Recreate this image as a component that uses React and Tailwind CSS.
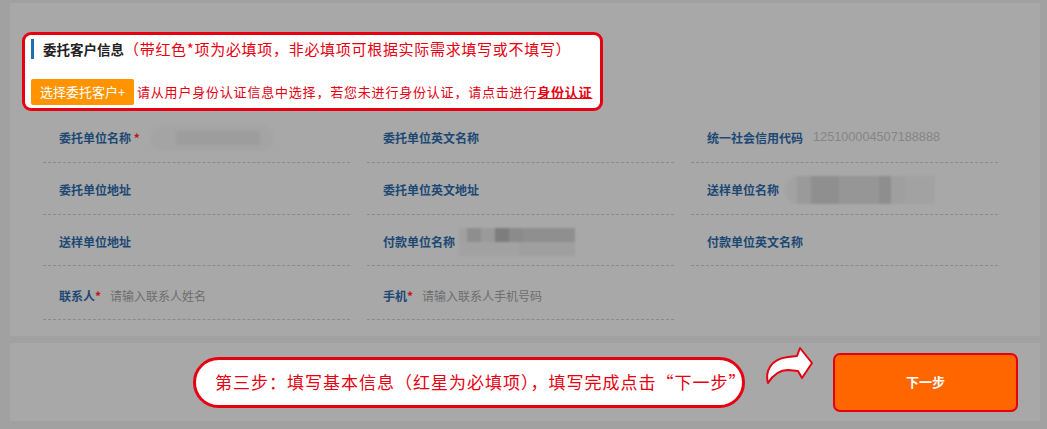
import React from 'react';

const rows = [
  {
    h: 'h-[52px] pt-[3px]',
    cells: [
      { label: '委托单位名称', req: ' *', blur: 'name' },
      { label: '委托单位英文名称' },
      { label: '统一社会信用代码', value: '125100004507188888' },
    ],
  },
  {
    h: 'h-[52px] pt-[3px]',
    cells: [
      { label: '委托单位地址' },
      { label: '委托单位英文地址' },
      { label: '送样单位名称', blur: 'sample' },
    ],
  },
  {
    h: 'h-[51px] pt-[3px]',
    cells: [
      { label: '送样单位地址' },
      { label: '付款单位名称', blur: 'pay' },
      { label: '付款单位英文名称' },
    ],
  },
  {
    h: 'h-[54px] pt-[6px]',
    cells: [
      { label: '联系人', req: '*', placeholder: '请输入联系人姓名' },
      { label: '手机', req: '*', placeholder: '请输入联系人手机号码' },
      null,
    ],
  },
];

const Blurred = ({ kind }) => {
  if (kind === 'name') {
    return (
      <div className="ml-[10px] flex h-[26px] w-[124px] items-center rounded-full bg-[#a4a4a4] blur-[1.5px]">
        <div className="ml-[26px] h-[14px] w-[84px] bg-[#9d9d9d]" />
      </div>
    );
  }
  if (kind === 'sample') {
    return (
      <div className="ml-[6px] flex h-[28px] w-[150px] items-center rounded-l-full bg-[#a2a2a2] blur-[1px]">
        <div className="ml-[12px] h-[28px] w-[14px] bg-[#9a9a9a]" />
        <div className="h-[28px] w-[28px] bg-[#8f8f8f]" />
        <div className="h-[28px] w-[40px] bg-[#969696]" />
        <div className="h-[28px] w-[12px] bg-[#8e8e8e]" />
        <div className="h-[28px] w-[14px] bg-[#9f9f9f]" />
      </div>
    );
  }
  return (
    <div className="ml-[4px] flex h-[28px] w-[116px] flex-col rounded-l-lg bg-[#a4a4a4] blur-[0.8px]">
      <div className="flex h-[14px]">
        <div className="w-[8px] bg-[#a0a0a0]" />
        <div className="w-[14px] bg-[#8e8e8e]" />
        <div className="w-[14px] bg-[#9a9a9a]" />
        <div className="w-[14px] bg-[#7d7d7d]" />
        <div className="w-[14px] bg-[#8b8b8b]" />
        <div className="w-[52px] bg-[#8f8f8f]" />
      </div>
      <div className="flex h-[14px]">
        <div className="w-[60px] bg-[#a2a2a2]" />
        <div className="w-[56px] bg-[#9f9f9f]" />
      </div>
    </div>
  );
};

const Field = ({ cell, h }) => {
  if (!cell) return <div className={h} />;
  return (
    <div className={`${h} flex items-center border-b border-dashed border-[#8a8a8a] pl-[16px]`}>
      <span className="text-[12px] font-bold text-[#1d4874]">{cell.label}</span>
      {cell.req && <span className="text-[12px] font-bold text-[#c0101a] whitespace-pre">{cell.req}</span>}
      {cell.value && (
        <span className="ml-[10px] font-[Liberation_Sans,sans-serif] text-[12.7px] text-[#858585]">{cell.value}</span>
      )}
      {cell.placeholder && <span className="ml-[9px] text-[12px] text-[#6e6e6e]">{cell.placeholder}</span>}
      {cell.blur && <Blurred kind={cell.blur} />}
    </div>
  );
};

const CurvedArrow = () => (
  <svg width="50" height="38" viewBox="0 0 50 38" className="overflow-visible">
    <path
      d="M4 36 C1 25 6 12 24 10 L33 9 L36 1 L48 16 L38 31 L34 24 L24 23 C16 23 9 28 4 36 Z"
      fill="#ffffff"
      stroke="#e60012"
      strokeWidth="2"
      strokeLinejoin="round"
    />
  </svg>
);

export default function App() {
  return (
    <div className="h-[429px] w-[1047px] overflow-hidden bg-[#a1a1a1] pl-[10px] pr-[7px] pt-[3px] font-[Noto_Sans_CJK_SC,sans-serif]">
      {/* Main form panel */}
      <div className="h-[333px] bg-[#a8a8a8] pt-[29px]">
        <div className="ml-[12px] h-[79px] w-[581px] rounded-[9px] border-[3px] border-[#e60012] bg-white pt-[4px] pl-[6px]">
          <div className="flex h-[20px] items-center">
            <div className="h-[20px] w-[3px] bg-[#1f6fb5]" />
            <span className="ml-[9px] text-[13.5px] font-bold text-[#222]">委托客户信息</span>
            <span className="whitespace-nowrap text-[15px] tracking-[0.7px] text-[#e60012]">
              （带红色*项为必填项，非必填项可根据实际需求填写或不填写）
            </span>
          </div>
          <div className="mt-[20px] flex h-[26px] items-center">
            <div className="flex h-[26px] w-[103px] items-center justify-center rounded-[2px] bg-[#ff9400] text-[13px] text-white">
              选择委托客户+
            </div>
            <span className="ml-[3px] whitespace-nowrap text-[13px] tracking-[0.8px] text-[#e60012]">
              请从用户身份认证信息中选择，若您未进行身份认证，请点击进行
              <span className="font-bold underline">身份认证</span>
            </span>
          </div>
        </div>

        <div className="ml-[33px] grid w-[955px] grid-cols-[307px_307px_307px] gap-x-[17px]">
          {rows.map((row, i) => (
            <React.Fragment key={i}>
              {row.cells.map((cell, j) => (
                <Field key={j} cell={cell} h={row.h} />
              ))}
            </React.Fragment>
          ))}
        </div>
      </div>

      {/* Bottom step bar */}
      <div className="mt-[7px] flex h-[78px] items-center justify-end bg-[#a8a8a8] pr-[22px]">
        <div className="flex h-[51px] w-[552px] items-center rounded-full border-[3px] border-[#e60012] bg-white pl-[19px]">
          <span className="whitespace-nowrap text-[17px] tracking-[1px] text-[#e60012]">
            第三步：填写基本信息（红星为必填项），填写完成点击“下一步”
          </span>
        </div>
        <div className="mx-[19px] mt-[4px] self-start">
          <CurvedArrow />
        </div>
        <div className="flex h-[59px] w-[185px] items-center justify-center rounded-[7px] border-2 border-[#e60012] bg-[#ff6600] text-[13px] font-bold text-white">
          下一步
        </div>
      </div>
    </div>
  );
}
